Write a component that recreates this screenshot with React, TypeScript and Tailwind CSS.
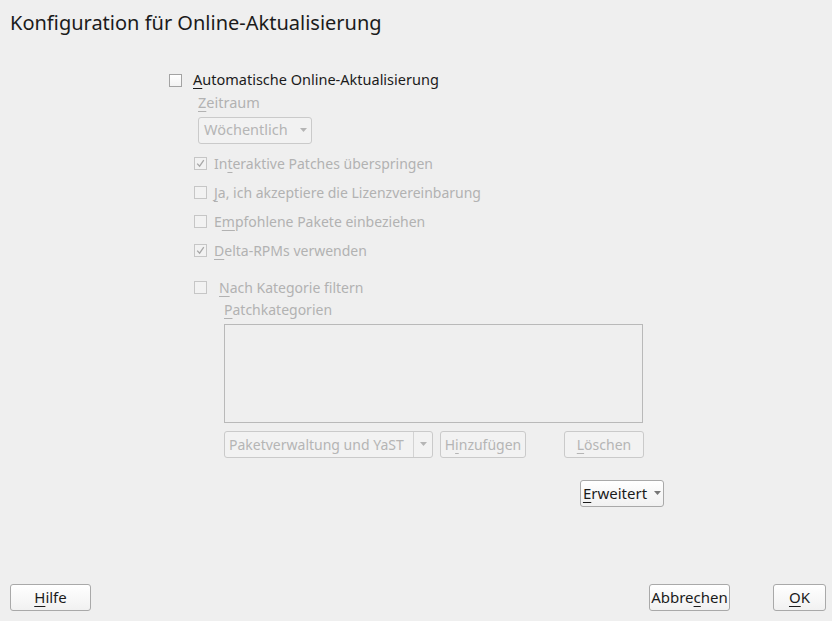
import { ReactNode } from "react";

const font = { fontFamily: '"Noto Sans", "Liberation Sans", sans-serif' };

// letter with the keyboard mnemonic underline
const M = ({ children }: { children: ReactNode }) => <span className="underline underline-offset-[3px]">{children}</span>;

const Check = ({ checked, disabled }: { checked?: boolean; disabled?: boolean }) => (
  <div
    className={`w-[13px] h-[13px] border flex items-center justify-center shrink-0 ${
      disabled ? "border-[#c6c6c6] bg-[#f2f2f2]" : "border-[#a3a3a3] bg-gradient-to-b from-white to-[#f3f3f3]"
    }`}
  >
    {checked && (
      <svg width="9" height="9" viewBox="0 0 9 9">
        <path d="M1.2 4.6 L3.6 7.2 L7.8 1.2" fill="none" stroke={disabled ? "#a8a8a8" : "#333"} strokeWidth="1.3" />
      </svg>
    )}
  </div>
);

const Arrow = ({ color = "#b5b5b5" }: { color?: string }) => (
  <svg width="7" height="4" viewBox="0 0 7 4">
    <path d="M0 0 L7 0 L3.5 4 Z" fill={color} />
  </svg>
);

const CheckRow = ({ checked, children }: { checked?: boolean; children: ReactNode }) => (
  <div className="flex items-center h-[29px]">
    <Check checked={checked} disabled />
    <span className="ml-[7px] text-[#b2b2b2]">{children}</span>
  </div>
);

const Button = ({ children, className = "" }: { children: ReactNode; className?: string }) => (
  <button
    className={`h-[27px] rounded-[3px] border border-[#a9a9a9] bg-gradient-to-b from-white to-[#f1f1f1] text-[#1b1b1b] text-[15px] flex items-center justify-center ${className}`}
  >
    {children}
  </button>
);

const DisabledButton = ({ children, className = "" }: { children: ReactNode; className?: string }) => (
  <div
    className={`h-[27px] rounded-[3px] border border-[#cacaca] bg-[#f2f2f2] text-[#b5b5b5] flex items-center justify-center whitespace-nowrap ${className}`}
  >
    {children}
  </div>
);

export default function App() {
  return (
    <div className="w-[832px] h-[621px] bg-[#efefef] flex flex-col text-[14px] text-[#1b1b1b]" style={font}>
      <h1 className="pl-[10px] pt-[9px] text-[20px] leading-[28px]">Konfiguration für Online-Aktualisierung</h1>

      <div className="flex-1 pl-[169px] pt-[35px]">
        <div className="flex items-center h-[16px]">
          <Check />
          <span className="ml-[11px] text-[14.5px]">
            <M>A</M>utomatische Online-Aktualisierung
          </span>
        </div>

        <div className="pl-[29px] pt-[4px] text-[#b2b2b2] text-[14.5px]">
          <M>Z</M>eitraum
        </div>
        <DisabledButton className="ml-[29px] mt-[3px] w-[114px] h-[27px] justify-start pl-[5px] gap-[12px] text-[14.5px]">
          Wöchentlich <Arrow />
        </DisabledButton>

        <div className="pl-[25px] pt-[5px]">
          <CheckRow checked>
            In<M>t</M>eraktive Patches überspringen
          </CheckRow>
          <CheckRow>
            <M>J</M>a, ich akzeptiere die Lizenzvereinbarung
          </CheckRow>
          <CheckRow>
            E<M>m</M>pfohlene Pakete einbeziehen
          </CheckRow>
          <CheckRow checked>
            <M>D</M>elta-RPMs verwenden
          </CheckRow>

          <div className="flex items-center h-[29px] mt-[8px]">
            <Check disabled />
            <span className="ml-[12px] text-[#b2b2b2]">
              <M>N</M>ach Kategorie filtern
            </span>
          </div>

          <div className="pl-[30px]">
            <div className="text-[#b2b2b2] leading-[16px]">
              <M>P</M>atchkategorien
            </div>
            <div className="mt-[6px] w-[419px] h-[99px] border border-[#b9b9b9] bg-[#efefef]" />

            <div className="flex mt-[8px] w-[420px]">
              <div className="h-[27px] w-[209px] rounded-[3px] border border-[#cacaca] bg-[#f2f2f2] text-[#b5b5b5] flex items-center whitespace-nowrap">
                <span className="pl-[4px] flex-1">Paketverwaltung und YaST</span>
                <div className="h-full w-[19px] border-l border-[#d3d3d3] flex items-center justify-center">
                  <Arrow />
                </div>
              </div>
              <DisabledButton className="ml-[7px] w-[86px]">
                H<M>i</M>nzufügen
              </DisabledButton>
              <DisabledButton className="ml-auto w-[80px]">
                <M>L</M>öschen
              </DisabledButton>
            </div>

            <div className="flex justify-end w-[440px] mt-[22px]">
              <Button className="w-[84px] h-[26px] gap-[7px] text-[15px]">
                <span>
                  <M>E</M>rweitert
                </span>
                <Arrow color="#777" />
              </Button>
            </div>
          </div>
        </div>
      </div>

      <div className="flex items-center pl-[10px] pr-[6px] pb-[10px]">
        <Button className="w-[81px]">
          <M>H</M>ilfe
        </Button>
        <Button className="ml-auto w-[81px]">
          Abbre<M>c</M>hen
        </Button>
        <Button className="ml-[43px] w-[53px] border-[#3a7ec2] bg-gradient-to-b from-[#f6f9fc] to-[#e6edf4]">
          <M>O</M>K
        </Button>
      </div>
    </div>
  );
}
